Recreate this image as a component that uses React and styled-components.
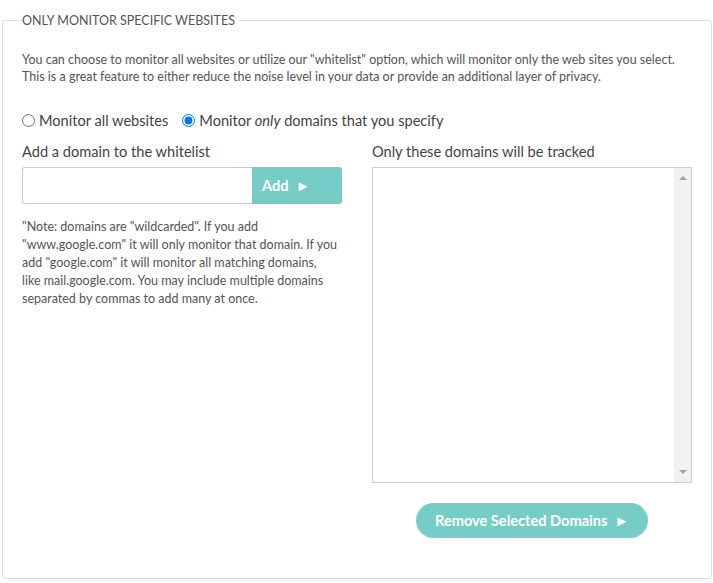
import React from 'react';
import styled, { createGlobalStyle } from 'styled-components';

const Global = createGlobalStyle`
  body {
    margin: 0;
    background: #fff;
    font-family: Lato, "Liberation Sans", sans-serif;
    color: #444;
  }
`;

const Fieldset = styled.fieldset`
  margin: 13px 1px 4px 2px;
  border: 1px solid #ddd;
  border-radius: 3px;
  padding: 10px 19px 38px 19px;
  height: 566px;
  box-sizing: border-box;
  display: flex;
  flex-direction: column;
`;

const Legend = styled.legend`
  font-size: 12.5px;
  color: #555;
  padding: 0 4px 0 0;
  text-transform: uppercase;
`;

const Intro = styled.p`
  font-size: 12.5px;
  line-height: 17px;
  margin: 13px 0 0;
  color: #555;
`;

const RadioRow = styled.div`
  display: flex;
  align-items: center;
  gap: 14px;
  margin-top: 27px;
  font-size: 14.6px;
  color: #444;
`;

const RadioLabel = styled.label`
  display: flex;
  align-items: center;
  gap: 4px;
`;

const Radio = styled.input`
  margin: 0;
  width: 13px;
  height: 13px;
`;

const Columns = styled.div`
  display: grid;
  grid-template-columns: 320px 320px;
  column-gap: 30px;
  margin-top: 14px;
  flex: 1;
`;

const Col = styled.div`
  display: flex;
  flex-direction: column;
`;

const Label = styled.div`
  font-size: 14.6px;
  color: #444;
  line-height: 17px;
  margin-bottom: 7px;
`;

const InputRow = styled.div`
  display: flex;
  height: 37px;
`;

const TextInput = styled.input`
  width: 230px;
  box-sizing: border-box;
  border: 1px solid #ccc;
  border-right: none;
  border-radius: 3px 0 0 3px;
  margin: 0;
  font: inherit;
`;

const AddButton = styled.button`
  flex: 1;
  border: none;
  background: #76cdc7;
  color: #fff;
  font: inherit;
  font-weight: 700;
  font-size: 14.6px;
  text-align: left;
  padding: 0 0 0 10px;
  border-radius: 0 3px 3px 0;
`;

const Note = styled.p`
  font-size: 12.5px;
  line-height: 18px;
  color: #555;
  margin: 14px 0 0;
`;

const ListBox = styled.div`
  height: 316px;
  border: 1px solid #ccc;
  box-sizing: border-box;
  display: flex;
  justify-content: flex-end;
`;

const Track = styled.div`
  width: 17px;
  background: #f1f1f1;
  display: flex;
  flex-direction: column;
  justify-content: space-between;
  align-items: center;
  padding: 8px 0;
`;

const Arrow = styled.div`
  width: 0;
  height: 0;
  border-left: 4px solid transparent;
  border-right: 4px solid transparent;
  ${p => (p.$up ? 'border-bottom: 4px solid #a3a3a3;' : 'border-top: 4px solid #a3a3a3;')}
`;

const RemoveButton = styled.button`
  align-self: center;
  margin-top: 20px;
  height: 35px;
  padding: 0 19px;
  border: none;
  border-radius: 18px;
  background: #76cdc7;
  color: #fff;
  font: inherit;
  font-weight: 700;
  font-size: 14.6px;
`;

export default function App() {
  return (
    <>
      <Global />
      <Fieldset>
        <Legend>Only monitor specific websites</Legend>
        <Intro>
          You can choose to monitor all websites or utilize our "whitelist" option, which will monitor only the web sites you select.
          <br />
          This is a great feature to either reduce the noise level in your data or provide an additional layer of privacy.
        </Intro>
        <RadioRow>
          <RadioLabel>
            <Radio type="radio" name="mode" />
            Monitor all websites
          </RadioLabel>
          <RadioLabel>
            <Radio type="radio" name="mode" defaultChecked />
            <span>Monitor <em>only</em> domains that you specify</span>
          </RadioLabel>
        </RadioRow>
        <Columns>
          <Col>
            <Label>Add a domain to the whitelist</Label>
            <InputRow>
              <TextInput type="text" />
              <AddButton>Add &nbsp;►</AddButton>
            </InputRow>
            <Note>
              "Note: domains are "wildcarded". If you add "www.google.com" it will only monitor that domain. If you add "google.com" it will monitor all matching domains,
              <br />
              like mail.google.com. You may include multiple domains separated by commas to add many at once.
            </Note>
          </Col>
          <Col>
            <Label>Only these domains will be tracked</Label>
            <ListBox>
              <Track>
                <Arrow $up />
                <Arrow />
              </Track>
            </ListBox>
            <RemoveButton>Remove Selected Domains &nbsp;►</RemoveButton>
          </Col>
        </Columns>
      </Fieldset>
    </>
  );
}
